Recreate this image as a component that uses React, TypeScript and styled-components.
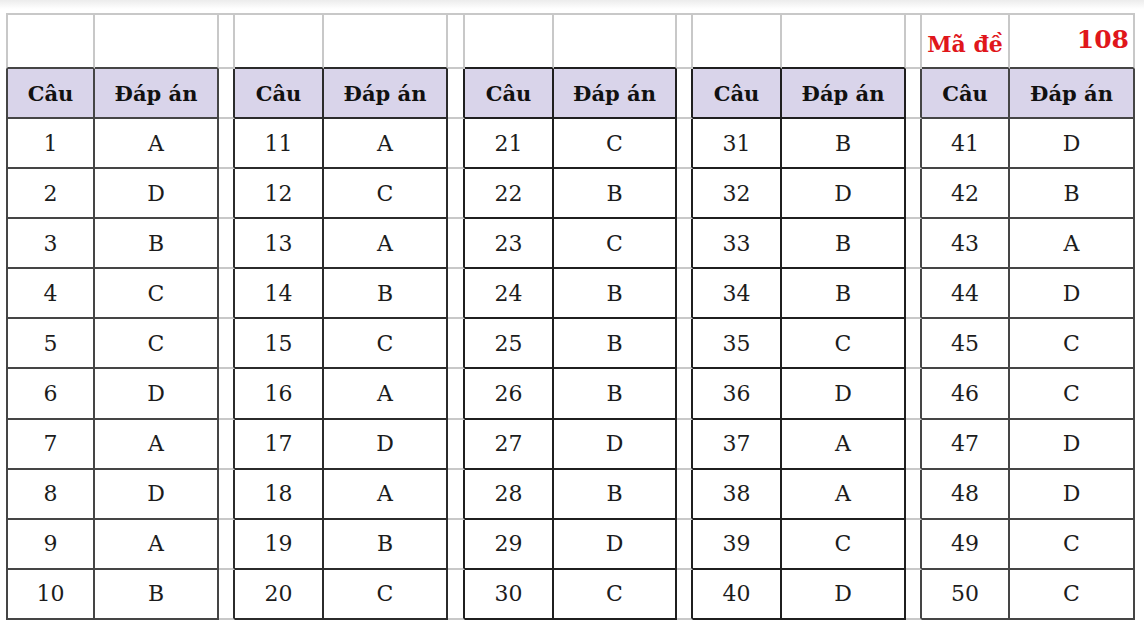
import React from "react";
import styled, { createGlobalStyle } from "styled-components";

const GlobalStyle = createGlobalStyle`
  html, body {
    margin: 0;
    padding: 0;
    background: #ffffff linear-gradient(to bottom, #ececec 0px, #ffffff 9px) no-repeat;
    background-size: 100% 10px;
  }
  #root {
    padding: 13px 0 0 6px;
  }
`;

const GRID = "#c8c8c8";
const TRACKS = [89, 124, 16, 89, 124, 17, 89, 123, 16, 89, 124, 16, 88, 125];

const Sheet = styled.div`
  display: grid;
  grid-template-columns: ${TRACKS.map((t) => `${t}px`).join(" ")};
  grid-template-rows: 56px 50px repeat(10, 50.1px);
  font-family: "DejaVu Serif", "Liberation Serif", serif;
  color: #1c1c1c;
`;

type CellProps = {
  $right: string;
  $bottom: string;
  $left?: string;
  $top?: string;
  $fill?: string;
};

const Cell = styled.div<CellProps>`
  box-sizing: border-box;
  display: flex;
  align-items: center;
  justify-content: center;
  padding-top: 1px;
  border-right: 2px solid ${(p) => p.$right};
  border-bottom: 2px solid ${(p) => p.$bottom};
  ${(p) => (p.$left ? `border-left: 2px solid ${p.$left};` : "")}
  ${(p) => (p.$top ? `border-top: 2px solid ${p.$top};` : "")}
  background: ${(p) => p.$fill ?? "transparent"};
  font-size: 22px;
  line-height: 1;
`;

const HeadCell = styled(Cell)`
  font-weight: bold;
  font-size: 21px;
  color: #111;
`;

const TitleCell = styled(Cell)<{ $align?: "center" | "flex-end" }>`
  align-items: flex-end;
  justify-content: ${(p) => p.$align ?? "center"};
  padding: 0 4px 14px 0;
  color: #e0161b;
  font-weight: bold;
`;

const MaDe = styled.span`
  font-size: 22px;
  padding-left: 4px;
  margin-bottom: -2px;
`;

const Number108 = styled.span`
  font-size: 25px;
  margin-bottom: 1px;
`;

const answers = [
  "ADBCCDADAB",
  "ACABCADABC",
  "CBCBBBDBDC",
  "BDBBCDAACD",
  "DBADCCDDCC",
];

const groupColors = ["#454545", "#2b2b2b", "#1f1f1f", "#1f1f1f", "#454545"];

type Col = { kind: "num" | "ans" | "gap"; group: number };
const cols: Col[] = [];
for (let g = 0; g < 5; g++) {
  cols.push({ kind: "num", group: g });
  cols.push({ kind: "ans", group: g });
  if (g < 4) cols.push({ kind: "gap", group: g });
}

export default function App() {
  const cells: React.ReactNode[] = [];

  cols.forEach((c, i) => {
    const bottom = c.kind === "gap" ? GRID : groupColors[c.group];
    const key = `t${i}`;
    const common = {
      $right: GRID,
      $bottom: bottom,
      $top: GRID,
      $left: i === 0 ? GRID : undefined,
    };
    if (c.group === 4 && c.kind === "num") {
      cells.push(
        <TitleCell key={key} {...common}>
          <MaDe>Mã đề</MaDe>
        </TitleCell>
      );
    } else if (c.group === 4 && c.kind === "ans") {
      cells.push(
        <TitleCell key={key} {...common} $align="flex-end">
          <Number108>108</Number108>
        </TitleCell>
      );
    } else {
      cells.push(<Cell key={key} {...common} />);
    }
  });

  cols.forEach((c, i) => {
    const key = `h${i}`;
    if (c.kind === "gap") {
      cells.push(<Cell key={key} $right={groupColors[c.group + 1]} $bottom={GRID} />);
      return;
    }
    const color = groupColors[c.group];
    cells.push(
      <HeadCell
        key={key}
        $right={color}
        $bottom={color}
        $left={i === 0 ? color : undefined}
        $fill="#d9d4ea"
      >
        {c.kind === "num" ? "Câu" : "Đáp án"}
      </HeadCell>
    );
  });

  for (let r = 0; r < 10; r++) {
    cols.forEach((c, i) => {
      const key = `d${r}-${i}`;
      if (c.kind === "gap") {
        cells.push(<Cell key={key} $right={groupColors[c.group + 1]} $bottom={GRID} />);
        return;
      }
      const color = groupColors[c.group];
      const text = c.kind === "num" ? String(c.group * 10 + r + 1) : answers[c.group][r];
      cells.push(
        <Cell key={key} $right={color} $bottom={color} $left={i === 0 ? color : undefined}>
          {text}
        </Cell>
      );
    });
  }

  return (
    <>
      <GlobalStyle />
      <Sheet>{cells}</Sheet>
    </>
  );
}
